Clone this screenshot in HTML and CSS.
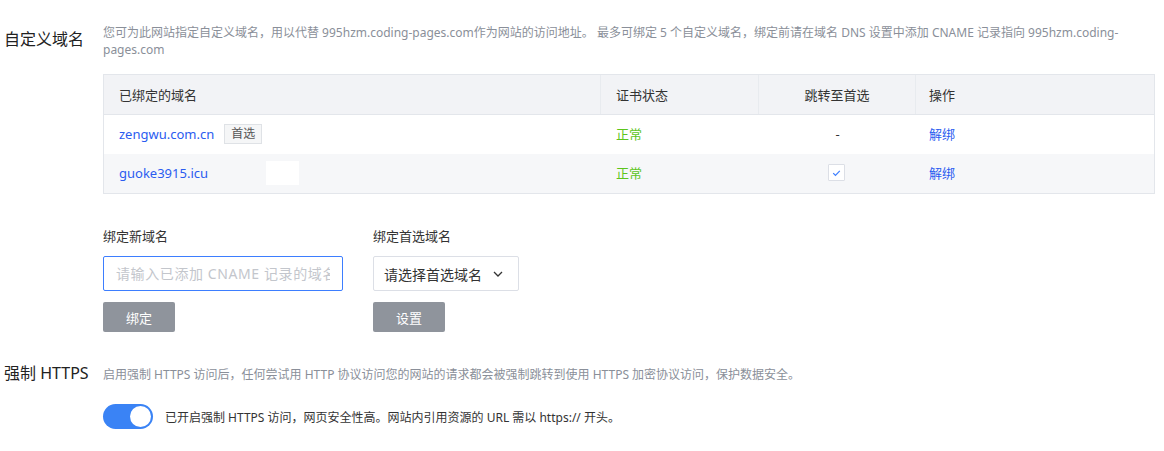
FILE: index.html
```html
<!DOCTYPE html>
<html lang="zh-CN">
<head>
<meta charset="utf-8">
<title>自定义域名</title>
<link rel="stylesheet" href="styles.css">
</head>
<body>
<div class="page">
  <section class="sec sec-domain">
    <div class="sec-label">自定义域名</div>
    <div class="sec-body">
      <p class="desc">您可为此网站指定自定义域名，用以代替 995hzm.coding-pages.com作为网站的访问地址。 最多可绑定 5 个自定义域名，绑定前请在域名 DNS 设置中添加 CNAME 记录指向 995hzm.coding-<br>pages.com</p>
      <div class="table">
        <div class="tr th">
          <div class="c c1">已绑定的域名</div>
          <div class="c c2">证书状态</div>
          <div class="c c3">跳转至首选</div>
          <div class="c c4">操作</div>
        </div>
        <div class="tr">
          <div class="c c1"><a class="link">zengwu.com.cn</a><span class="tag">首选</span></div>
          <div class="c c2 ok">正常</div>
          <div class="c c3">-</div>
          <div class="c c4"><a class="link">解绑</a></div>
        </div>
        <div class="tr alt">
          <div class="c c1"><a class="link">guoke3915.icu</a><span class="mask"></span></div>
          <div class="c c2 ok">正常</div>
          <div class="c c3"><span class="chk"><svg viewBox="0 0 16 16" width="16" height="16"><path d="M4.5 8.2l2.4 2.4 4.6-4.8" fill="none" stroke="#3d7eff" stroke-width="1.3"/></svg></span></div>
          <div class="c c4"><a class="link">解绑</a></div>
        </div>
      </div>
      <div class="forms">
        <div class="fgroup">
          <div class="flabel">绑定新域名</div>
          <input class="input" type="text" placeholder="请输入已添加 CNAME 记录的域名">
          <button class="btn">绑定</button>
        </div>
        <div class="fgroup">
          <div class="flabel">绑定首选域名</div>
          <div class="select">请选择首选域名<svg class="chev" viewBox="0 0 10 6" width="10" height="6"><path d="M1 1l4 4 4-4" fill="none" stroke="#333" stroke-width="1.3"/></svg></div>
          <button class="btn">设置</button>
        </div>
      </div>
    </div>
  </section>
  <section class="sec sec-https">
    <div class="sec-label">强制 HTTPS</div>
    <div class="sec-body">
      <p class="desc">启用强制 HTTPS 访问后，任何尝试用 HTTP 协议访问您的网站的请求都会被强制跳转到使用 HTTPS 加密协议访问，保护数据安全。</p>
      <div class="switch-row">
        <span class="switch"><span class="knob"></span></span>
        <span class="switch-text">已开启强制 HTTPS 访问，网页安全性高。网站内引用资源的 URL 需以 https:// 开头。</span>
      </div>
    </div>
  </section>
</div>
</body>
</html>
```
FILE: styles.css
```css
* { box-sizing: border-box; }
html, body { margin: 0; padding: 0; background: #fff; }
body {
  font-family: "Noto Sans", "Noto Sans CJK SC", sans-serif;
  color: #333;
  font-size: 13px;
}
.page { padding: 24px 9px 0 4px; }
.sec { display: flex; }
.sec-label {
  width: 99px;
  flex: none;
  font-size: 16px;
  line-height: 24px;
  padding-top: 3px;
  color: #222;
}
.sec-body { flex: 1; min-width: 0; }
.desc {
  margin: 0;
  font-size: 12px;
  line-height: 17px;
  color: #8a8f99;
}
.table {
  margin-top: 16px;
  border: 1px solid #e3e6eb;
}
.tr { display: flex; height: 39px; align-items: center; background: #fff; }
.tr.th { background: #f2f3f6; border-bottom: 1px solid #e3e6eb; height: 40px; }
.tr.alt { background: #f6f7f9; height: 39px; }
.c { padding: 0 15px; height: 100%; display: flex; align-items: center; padding-bottom: 2px; }
.th .c { border-right: 1px solid #e8ebef; padding-bottom: 1px; }
.th .c4 { border-right: none; }
.c1 { width: 497px; }
.c2 { width: 158px; }
.c3 { width: 157px; justify-content: center; }
.c4 { flex: 1; padding-left: 13px; }
.link { color: #2a5cf0; cursor: pointer; }
.ok { color: #5cc51c; }
.tag {
  margin-left: 10px;
  font-size: 12px;
  line-height: 18px;
  padding: 0 6px;
  border: 1px solid #dfe2e6;
  background: #f5f6f7;
  color: #555;
}
.mask { display: inline-block; width: 33px; height: 24px; background: #fff; margin-left: 58px; }
.chk {
  width: 17px; height: 17px;
  border: 1px solid #dcdfe6;
  background: #fff;
  display: flex; align-items: center; justify-content: center;
  border-radius: 1px;
  margin-left: -3px;
}
.chk svg { display: block; }
.forms { display: flex; gap: 30px; margin-top: 33px; }
.fgroup { display: flex; flex-direction: column; align-items: flex-start; }
.flabel { font-size: 13px; line-height: 18px; color: #333; }
.input {
  margin-top: 11px;
  width: 240px; height: 35px;
  border: 1px solid #3d7eff;
  border-radius: 2px;
  padding: 0 12px;
  font-family: inherit;
  font-size: 14px;
  letter-spacing: 0.6px;
  color: #333;
  outline: none;
}
.input::placeholder { color: #c3c6cc; }
.select {
  margin-top: 11px;
  width: 146px; height: 35px;
  border: 1px solid #dcdfe6;
  border-radius: 2px;
  padding: 0 10px;
  display: flex; align-items: center; justify-content: space-between;
  font-size: 14px;
  color: #333;
}
.chev { margin-right: 5px; }
.btn {
  margin-top: 11px;
  width: 72px; height: 30px;
  border: none; border-radius: 2px;
  background: #8f949c;
  color: #fff;
  font-family: inherit;
  font-size: 13px;
}
.sec-https { margin-top: 31px; }
.sec-https .sec-label { padding-top: 0; margin-top: -2px; line-height: 24px; }
.sec-https .desc { line-height: 24px; }
.switch-row { display: flex; align-items: center; margin-top: 17px; }
.switch {
  width: 50px; height: 25px;
  border-radius: 13px;
  background: #3a83f5;
  position: relative;
  flex: none;
}
.knob {
  position: absolute;
  right: 2px; top: 2px;
  width: 21px; height: 21px;
  border-radius: 50%;
  background: #fff;
}
.switch-text { margin-left: 12px; font-size: 12px; color: #333; }
```
